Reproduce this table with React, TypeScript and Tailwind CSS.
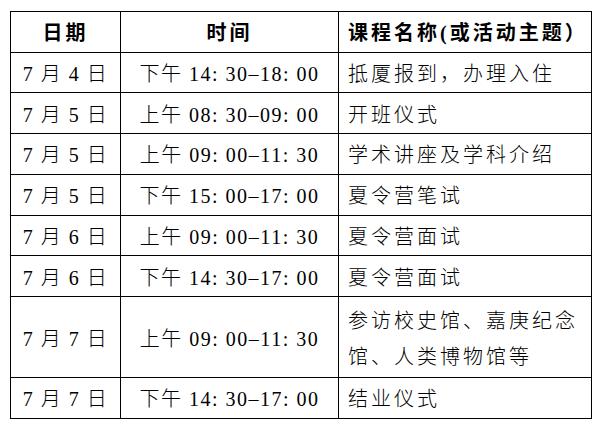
const rows: { date: string; time: string; topic: string[] }[] = [
  { date: '7 月 4 日', time: '下午 14: 30–18: 00', topic: ['抵厦报到，办理入住'] },
  { date: '7 月 5 日', time: '上午 08: 30–09: 00', topic: ['开班仪式'] },
  { date: '7 月 5 日', time: '上午 09: 00–11: 30', topic: ['学术讲座及学科介绍'] },
  { date: '7 月 5 日', time: '下午 15: 00–17: 00', topic: ['夏令营笔试'] },
  { date: '7 月 6 日', time: '上午 09: 00–11: 30', topic: ['夏令营面试'] },
  { date: '7 月 6 日', time: '下午 14: 30–17: 00', topic: ['夏令营面试'] },
  { date: '7 月 7 日', time: '上午 09: 00–11: 30', topic: ['参访校史馆、嘉庚纪念', '馆、人类博物馆等'] },
  { date: '7 月 7 日', time: '下午 14: 30–17: 00', topic: ['结业仪式'] },
]

const font = { fontFamily: '"Liberation Serif", "Noto Sans CJK SC", serif' }

export default function App() {
  return (
    <div className="w-[604px] h-[429px] bg-white pt-[11px] pl-[10px]" style={font}>
      <table className="border-collapse table-fixed text-black text-[20px]">
        <colgroup>
          <col className="w-[110px]" />
          <col className="w-[218px]" />
          <col className="w-[253px]" />
        </colgroup>
        <thead>
          <tr className="h-[40.5px]">
            <th className="border border-black text-center font-bold tracking-[3px] pt-[3px]">日期</th>
            <th className="border border-black text-center font-bold tracking-[3px] pt-[3px]">时间</th>
            <th className="border border-black text-left font-bold tracking-[3px] pl-[9px] pt-[3px] whitespace-nowrap">
              课程名称(或活动主题）
            </th>
          </tr>
        </thead>
        <tbody>
          {rows.map((r, i) => (
            <tr key={i} className={r.topic.length > 1 ? 'h-[81px]' : 'h-[40.75px]'}>
              <td className="border border-black text-center font-light tracking-[1.5px] whitespace-nowrap pt-[3px]">
                {r.date}
              </td>
              <td className="border border-black text-center font-light tracking-[1.5px] whitespace-nowrap pt-[3px]">
                {r.time}
              </td>
              <td className="border border-black pl-[9px] font-light tracking-[3px] leading-[36px] pt-[3px]">
                {r.topic.map((t, j) => (
                  <div key={j} className="whitespace-nowrap">{t}</div>
                ))}
              </td>
            </tr>
          ))}
        </tbody>
      </table>
    </div>
  )
}
